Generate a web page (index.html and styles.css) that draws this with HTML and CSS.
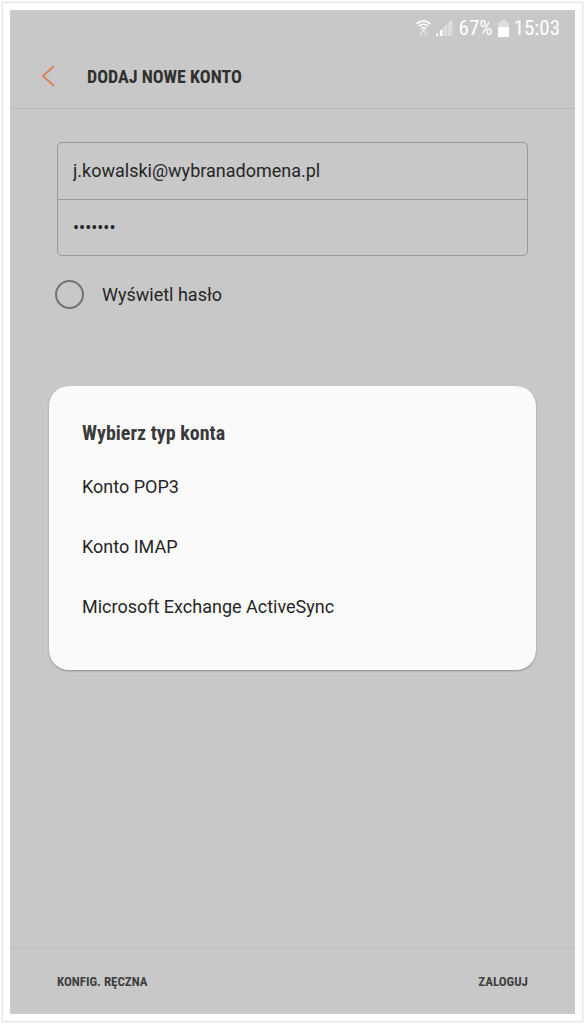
FILE: index.html
```html
<!DOCTYPE html>
<html lang="pl">
<head>
    <meta charset="UTF-8">
    <meta name="viewport" content="width=device-width, initial-scale=1.0">
    <title>Dodaj nowe konto</title>
    <link rel="stylesheet" href="styles.css">
</head>
<body>
    <div class="frame">
        <div class="screen">
            <div class="status-bar">
                <svg class="icon-wifi" width="15" height="18" viewBox="0 0 16 18" fill="none" stroke="#fff" stroke-width="1.7">
                    <path d="M0.8 4.6C4.8 0.4 11.2 0.4 15.2 4.6"/>
                    <path d="M3 7.2C5.8 4.3 10.2 4.3 13 7.2"/>
                    <path d="M5.2 9.7C6.8 8 9.2 8 10.8 9.7"/>
                    <path d="M8 10.2L9.6 11.6L8 13.2L6.4 11.6Z" fill="#fff" stroke="none"/>
                    <path d="M5.5 12.4L8 15H6.4V17H4.6V15H3ZM10.5 17L8 14.4H9.6V12.4H11.4V14.4H13Z" fill="#dcdcdc" stroke="none"/>
                </svg>
                <svg class="icon-signal" width="17" height="18" viewBox="0 0 17 18">
                    <path d="M0 15L2 14V17H0ZM3.8 12.2L6.6 9.6V17H3.8Z" fill="#fff"/>
                    <path d="M7.4 8.8L11 5.2V17H7.4ZM11.6 4.6L16.4 0V17H11.6Z" fill="#dcdcdc"/>
                </svg>
                <span class="battery-level">67%</span>
                <svg class="icon-battery" width="11" height="17" viewBox="0 0 11 17">
                    <path d="M0 7V3L3 1.5V0H8V1.5L11 3V7Z" fill="#dedede"/>
                    <path d="M0 7H11V17H0Z" fill="#fff"/>
                </svg>
                <span class="clock">15:03</span>
            </div>

            <header class="app-bar">
                <button class="back-button" type="button" aria-label="Wstecz">
                    <svg width="14" height="22" viewBox="0 0 14 22" fill="none" stroke="#d9825f" stroke-width="2">
                        <path d="M13 1L2 11L13 21"/>
                    </svg>
                </button>
                <h1 class="title">DODAJ NOWE KONTO</h1>
            </header>

            <main class="content">
                <form id="accountForm">
                    <div class="fields">
                        <input class="field" type="email" aria-label="Adres e-mail" value="j.kowalski@wybranadomena.pl">
                        <input class="field" type="password" aria-label="Hasło" value="haslo12">
                    </div>
                    <label class="show-password" for="showPassword">
                        <input type="checkbox" id="showPassword">
                        <span>Wyświetl hasło</span>
                    </label>
                </form>
            </main>

            <footer class="actions">
                <button class="action" type="button">KONFIG. RĘCZNA</button>
                <button class="action" type="submit" form="accountForm">ZALOGUJ</button>
            </footer>

            <div class="dialog" role="dialog" aria-labelledby="dialogTitle">
                <h2 class="dialog-title" id="dialogTitle">Wybierz typ konta</h2>
                <button class="option" type="button">Konto POP3</button>
                <button class="option" type="button">Konto IMAP</button>
                <button class="option" type="button">Microsoft Exchange ActiveSync</button>
            </div>
        </div>
    </div>
</body>
</html>
```
FILE: styles.css
```css
* { box-sizing: border-box; }

body {
    margin: 0;
    padding: 3px;
    background: #fff;
    color: #262626;
    font-family: Roboto, "Liberation Sans", sans-serif;
    font-size: 18px;
}

button, input {
    font-family: inherit;
    color: inherit;
}

button {
    padding: 0;
    border: none;
    background: none;
    cursor: pointer;
}

.frame {
    display: flex;
    min-height: calc(100vh - 6px);
    padding: 7px;
    background: #fff;
    box-shadow: 0 0 2px 1px #ddd;
}

.screen {
    position: relative;
    display: flex;
    flex: 1;
    flex-direction: column;
    background: #c8c8c8;
}

/* Status bar */
.status-bar {
    display: flex;
    align-items: center;
    justify-content: flex-end;
    height: 36px;
    padding-right: 15px;
    color: #fff;
    font-family: "Roboto Condensed", Roboto, sans-serif;
    font-size: 21px;
}

.icon-signal { margin: 0 6px 0 5px; }
.icon-battery { margin: 0 5px 0 5px; }

/* App bar */
.app-bar {
    display: flex;
    align-items: center;
    height: 63px;
    padding: 0 31px 2px;
    border-bottom: 1px solid #b9b9b9;
}

.back-button {
    display: flex;
    width: 46px;
}

.title {
    margin: 0;
    color: #303030;
    font-family: "Roboto Condensed", Roboto, sans-serif;
    font-size: 18px;
    font-weight: 700;
}

/* Account form */
.content {
    flex: 1;
    padding: 33px 47px;
}

.fields {
    border: 1px solid #999;
    border-radius: 5px;
}

.field {
    display: block;
    width: 100%;
    height: 56px;
    padding: 0 15px 1px;
    border: none;
    background: none;
    font-size: 18px;
}

.field + .field { border-top: 1px solid #999; }

.show-password {
    display: flex;
    align-items: center;
    gap: 18px;
    margin-top: 24px;
    margin-left: -2px;
}

.show-password input {
    appearance: none;
    width: 29px;
    height: 29px;
    margin: 0;
    border: 2px solid #757575;
    border-radius: 50%;
}

/* Bottom actions */
.actions {
    display: flex;
    align-items: center;
    justify-content: space-between;
    height: 67px;
    padding: 0 47px;
    border-top: 1px solid #bebebe;
}

.action {
    color: #404040;
    font-family: "Roboto Condensed", Roboto, sans-serif;
    font-size: 13px;
    font-weight: 700;
}

/* Account type dialog */
.dialog {
    position: absolute;
    top: 376px;
    left: 39px;
    right: 39px;
    display: flex;
    flex-direction: column;
    padding: 24px 33px 33px;
    border-radius: 20px;
    background: #fafafa;
    box-shadow: 0 1px 2px rgba(0, 0, 0, 0.3);
}

.dialog-title {
    margin: 0;
    color: #3a3a3a;
    font-family: "Roboto Condensed", Roboto, sans-serif;
    font-size: 20px;
    font-weight: 700;
    line-height: 47px;
}

.option {
    font-size: 18px;
    line-height: 60px;
    text-align: left;
}
```
